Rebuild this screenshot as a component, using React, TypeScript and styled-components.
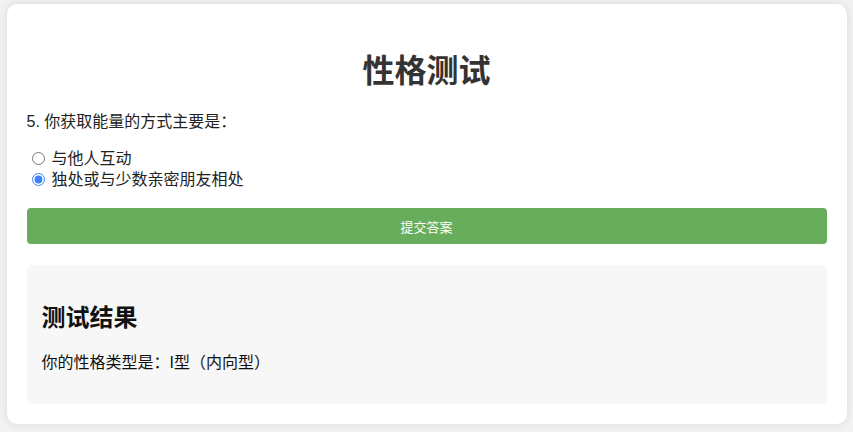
import React, { useState } from "react";
import styled, { createGlobalStyle } from "styled-components";

const GlobalStyle = createGlobalStyle`
  body {
    margin: 0;
    padding: 4px 0 10px;
    background: #f2f2f2;
    font-family: "Liberation Sans", "Noto Sans CJK SC", sans-serif;
  }
`;

const Card = styled.div`
  max-width: 800px;
  margin: 0 auto;
  padding: 20px;
  background: #fff;
  border-radius: 10px;
  box-shadow: 0 0 10px rgba(0, 0, 0, 0.1);
`;

const Title = styled.h1`
  margin: 21px 0 17px;
  text-align: center;
  font-size: 32px;
  font-weight: bold;
  color: #333;
`;

const Question = styled.p`
  margin: 0 0 16px;
  font-size: 16px;
  color: #222;
`;

const Options = styled.div`
  display: flex;
  flex-direction: column;
  margin-bottom: 18px;
`;

const OptionLabel = styled.label`
  display: flex;
  align-items: center;
  font-size: 16px;
  color: #222;
  line-height: 21px;

  input {
    margin: 0 7px 0 5px;
    width: 13px;
    height: 13px;
    accent-color: #3b82f6;
  }
`;

const SubmitButton = styled.button`
  display: block;
  width: 100%;
  height: 36px;
  border: none;
  border-radius: 4px;
  background: #68ad5c;
  color: #fff;
  font-family: inherit;
  font-size: 13px;
  cursor: pointer;
`;

const Result = styled.div`
  margin-top: 21px;
  padding: 15px;
  background: #f7f7f7;
  border-radius: 5px;
`;

const ResultTitle = styled.h2`
  margin: 18px 0 16px;
  font-size: 24px;
  font-weight: bold;
  color: #111;
`;

const ResultText = styled.p`
  margin: 0 0 16px;
  font-size: 16px;
  color: #111;
`;

const options = ["与他人互动", "独处或与少数亲密朋友相处"];

export default function App() {
  const [choice, setChoice] = useState(1);
  return (
    <>
      <GlobalStyle />
      <Card>
        <Title>性格测试</Title>
        <Question>5. 你获取能量的方式主要是：</Question>
        <Options>
          {options.map((o, i) => (
            <OptionLabel key={o}>
              <input
                type="radio"
                name="q5"
                checked={choice === i}
                onChange={() => setChoice(i)}
              />
              {o}
            </OptionLabel>
          ))}
        </Options>
        <SubmitButton>提交答案</SubmitButton>
        <Result>
          <ResultTitle>测试结果</ResultTitle>
          <ResultText>你的性格类型是：I型（内向型）</ResultText>
        </Result>
      </Card>
    </>
  );
}
